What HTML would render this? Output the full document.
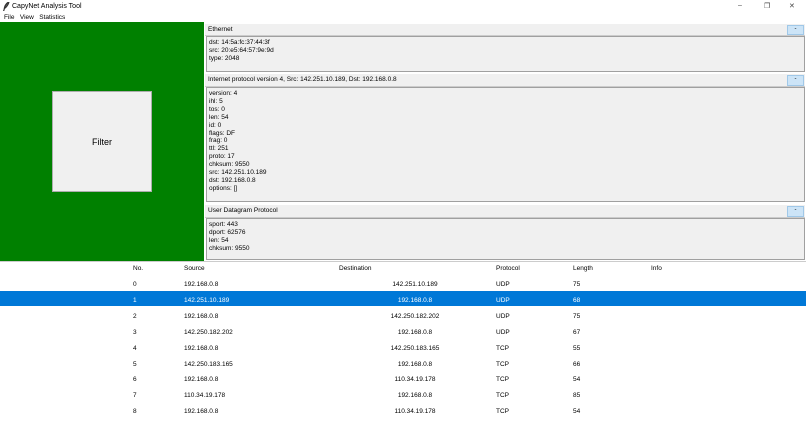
<!DOCTYPE html><html><head><style>
*{margin:0;padding:0;box-sizing:border-box}
body{width:806px;height:432px;background:#fff;font-family:"Liberation Sans",sans-serif;font-size:6.5px;color:#000;position:relative;overflow:hidden}
.a{position:absolute;white-space:nowrap}
.hdr{position:absolute;left:205px;width:600px;background:#f0f0f0;border-bottom:1px solid #ccc}
.box{position:absolute;left:206px;width:599px;background:#f0f0f0;border:1px solid #a0a0a0;padding:2px 2px;line-height:7.9px}
.btn{position:absolute;right:1px;width:17px;background:#cce4f7;border:1px solid #a0c8e8;text-align:center;font-size:6px}
.r{position:absolute;left:0;width:806px;height:16px}
</style></head><body>
<svg class="a" style="left:3px;top:2px" width="7" height="9" viewBox="0 0 7 9"><path d="M6 0 C3 1 1.5 4 1 8 L0.5 9 M6 0 C5 3 3.5 5 1.5 6.5" stroke="#333" stroke-width="1.2" fill="#555"/></svg>
<div class="a" style="left:12px;top:3px;font-size:7px">CapyNet Analysis Tool</div>
<div class="a" style="left:738px;top:2px;font-size:7px;color:#444">&#8211;</div>
<div class="a" style="left:764px;top:2px;font-size:7px;color:#444">&#10064;</div>
<div class="a" style="left:789px;top:2px;font-size:7px;color:#444">&#10005;</div>
<div class="a" style="left:4px;top:14px;font-size:6.5px">File&nbsp;&nbsp;&nbsp;View&nbsp;&nbsp;&nbsp;Statistics</div>
<div class="a" style="left:0;top:22px;width:204px;height:240px;background:#008000"></div>
<div class="a" style="left:52px;top:91px;width:100px;height:101px;background:#f0f0f0;border:1px solid #adadad;font-size:9px;text-align:center;line-height:101px">Filter</div>
<div class="a" style="left:204px;top:22px;width:602px;height:240px;background:#fff"></div>

<div class="hdr" style="top:24px;height:12px;padding:2px 3px">Ethernet<div class="btn" style="top:1px;height:10px">-</div></div>
<div class="box" style="top:36px;height:36px">dst: 14:5a:fc:37:44:3f<br>src: 20:e5:64:57:9e:9d<br>type: 2048</div>

<div class="hdr" style="top:74px;height:13px;padding:2px 3px">Internet protocol version 4, Src: 142.251.10.189, Dst: 192.168.0.8<div class="btn" style="top:1px;height:11px">-</div></div>
<div class="box" style="top:87px;height:115px">version: 4<br>ihl: 5<br>tos: 0<br>len: 54<br>id: 0<br>flags: DF<br>frag: 0<br>ttl: 251<br>proto: 17<br>chksum: 9550<br>src: 142.251.10.189<br>dst: 192.168.0.8<br>options: []</div>

<div class="hdr" style="top:205px;height:13px;padding:2px 3px">User Datagram Protocol<div class="btn" style="top:1px;height:11px">-</div></div>
<div class="box" style="top:218px;height:42px">sport: 443<br>dport: 62576<br>len: 54<br>chksum: 9550</div>

<div class="a" style="left:0;top:261px;width:806px;height:1px;background:#ccc"></div>
<div class="a" style="top:265px;left:133px">No.</div>
<div class="a" style="top:265px;left:184px">Source</div>
<div class="a" style="top:265px;left:339px">Destination</div>
<div class="a" style="top:265px;left:496px">Protocol</div>
<div class="a" style="top:265px;left:573px">Length</div>
<div class="a" style="top:265px;left:651px">Info</div>

<div class="r" style="top:291px;height:15px;background:#0078d7"></div>
<div id="rows"></div>
<script>
var d=[["0","192.168.0.8","142.251.10.189","UDP","75"],["1","142.251.10.189","192.168.0.8","UDP","68"],["2","192.168.0.8","142.250.182.202","UDP","75"],["3","142.250.182.202","192.168.0.8","UDP","67"],["4","192.168.0.8","142.250.183.165","TCP","55"],["5","142.250.183.165","192.168.0.8","TCP","66"],["6","192.168.0.8","110.34.19.178","TCP","54"],["7","110.34.19.178","192.168.0.8","TCP","85"],["8","192.168.0.8","110.34.19.178","TCP","54"]];
var h="";d.forEach(function(r,i){var t=281+i*15.9;var c=i==1?"color:#fff;":"";
h+='<div class="a" style="'+c+'top:'+t+'px;left:133px">'+r[0]+'</div><div class="a" style="'+c+'top:'+t+'px;left:184px">'+r[1]+'</div><div class="a" style="'+c+'top:'+t+'px;left:365px;width:100px;text-align:center">'+r[2]+'</div><div class="a" style="'+c+'top:'+t+'px;left:496px">'+r[3]+'</div><div class="a" style="'+c+'top:'+t+'px;left:573px">'+r[4]+'</div>';});
document.getElementById("rows").innerHTML=h;
</script>
</body></html>
